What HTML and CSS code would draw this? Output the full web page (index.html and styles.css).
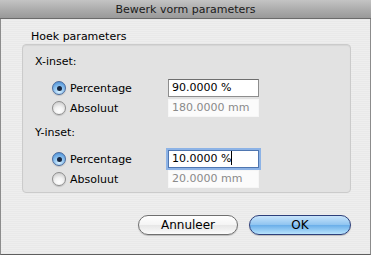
FILE: index.html
```html
<!DOCTYPE html>
<html lang="nl">
<head>
  <meta charset="UTF-8">
  <title>Bewerk vorm parameters</title>
  <link rel="stylesheet" href="styles.css">
</head>
<body>
  <div class="window">
    <div class="titlebar">Bewerk vorm parameters</div>

    <div class="content">
      <div class="group-label">Hoek parameters</div>
      <div class="group">
        <!-- X inset -->
        <div class="heading">X-inset:</div>
        <div class="rows">
          <div class="row">
            <span class="radio on"></span>
            <span class="label">Percentage</span>
            <span class="field">90.0000 %</span>
          </div>
          <div class="row">
            <span class="radio"></span>
            <span class="label">Absoluut</span>
            <span class="field disabled">180.0000 mm</span>
          </div>
        </div>

        <!-- Y inset -->
        <div class="heading">Y-inset:</div>
        <div class="rows">
          <div class="row">
            <span class="radio on"></span>
            <span class="label">Percentage</span>
            <span class="field focus">10.0000 %<i class="caret"></i></span>
          </div>
          <div class="row">
            <span class="radio"></span>
            <span class="label">Absoluut</span>
            <span class="field disabled">20.0000 mm</span>
          </div>
        </div>
      </div>

      <div class="buttons">
        <button class="btn">Annuleer</button>
        <button class="btn default">OK</button>
      </div>
    </div>
  </div>
</body>
</html>
```

FILE: styles.css
```css
html, body{
  margin:0;
  padding:0;
}
body{
  width:371px;
  height:255px;
  overflow:hidden;
  font-family:"DejaVu Sans", "Liberation Sans", sans-serif;
  font-size:11px;
  color:#000;
}
.window{
  width:371px;
  height:255px;
  box-sizing:border-box;
  border:1px solid #8c8c8c;
  border-top:none;
  border-bottom-color:#5e5e5e;
  background:#ebebeb repeating-linear-gradient(0deg, #e9e9e9 0 1px, #eeeeee 1px 2px);
  display:flex;
  flex-direction:column;
}
.titlebar{
  height:18px;
  line-height:19px;
  text-align:center;
  font-size:11px;
  color:#1a1a1a;
  background:linear-gradient(#c4c4c4, #a9a9a9 60%, #999999);
  border-bottom:1px solid #6b6b6b;
  margin:0 -1px;
}
.content{
  flex:1;
  display:flex;
  flex-direction:column;
  padding:0 19px 0 21px;
}
.group-label{
  margin-top:11px;
  padding-left:9px;
  height:14px;
  line-height:14px;
  font-size:11px;
}
.group{
  margin-top:0;
  height:149px;
  box-sizing:border-box;
  border:1px solid #cbcbcb;
  border-radius:4px;
  background:#e2e2e2;
  box-shadow:inset 0 1px 1px rgba(0,0,0,.06);
  padding:9px 0 0 12px;
}
.heading{
  height:16px;
  line-height:16px;
}
.rows{
  margin:8px 0 7px 17px;
}
.row{
  height:20px;
  display:flex;
  align-items:center;
}
.radio{
  width:14px;
  height:14px;
  box-sizing:border-box;
  border-radius:50%;
  border:1px solid #8e8e8e;
  background:radial-gradient(circle at 50% 75%, #ffffff, #f2f2f2 40%, #c9c9c9 90%);
  box-shadow:0 1px 1px rgba(0,0,0,.15);
  position:relative;
}
.radio.on{
  border-color:#4a6a9c;
  background:radial-gradient(circle at 50% 80%, #d8f0ff, #8fc3ef 45%, #4b8fd6 90%);
}
.radio.on::after{
  content:"";
  position:absolute;
  left:3.5px;
  top:3.5px;
  width:5px;
  height:5px;
  border-radius:50%;
  background:#17263f;
}
.label{
  margin-left:4px;
  width:98px;
}
.field{
  width:91px;
  height:18px;
  box-sizing:border-box;
  line-height:16px;
  padding:0 3px;
  background:#fff;
  border:1px solid #8d8d8d;
  border-top-color:#6e6e6e;
  font-size:11px;
  position:relative;
}
.field.disabled{
  border-color:#f6f6f6;
  background:#fbfbfb;
  color:#8a8a8a;
}
.field.focus{
  border-color:#4f76b0;
  box-shadow:0 0 0 2px #8db3e6;
}
.caret{
  display:inline-block;
  width:1px;
  height:14px;
  background:#000;
  vertical-align:-3px;
}
.buttons{
  margin-top:22px;
  display:flex;
  justify-content:flex-end;
  gap:11px;
}
.btn{
  height:20px;
  width:100px;
  padding:0;
  border-radius:10px;
  border:1px solid #6f6f6f;
  background:linear-gradient(#ffffff, #f4f4f4 50%, #e6e6e6 51%, #fbfbfb);
  font-family:"DejaVu Sans", "Liberation Sans", sans-serif;
  font-size:12px;
  color:#000;
  box-shadow:0 1px 1px rgba(0,0,0,.2);
}
.btn.default{
  width:102px;
  border-color:#2d3f7a;
  background:linear-gradient(#c8e4fb, #8ec4f0 50%, #6aaee9 51%, #b8e3fc);
}
```
